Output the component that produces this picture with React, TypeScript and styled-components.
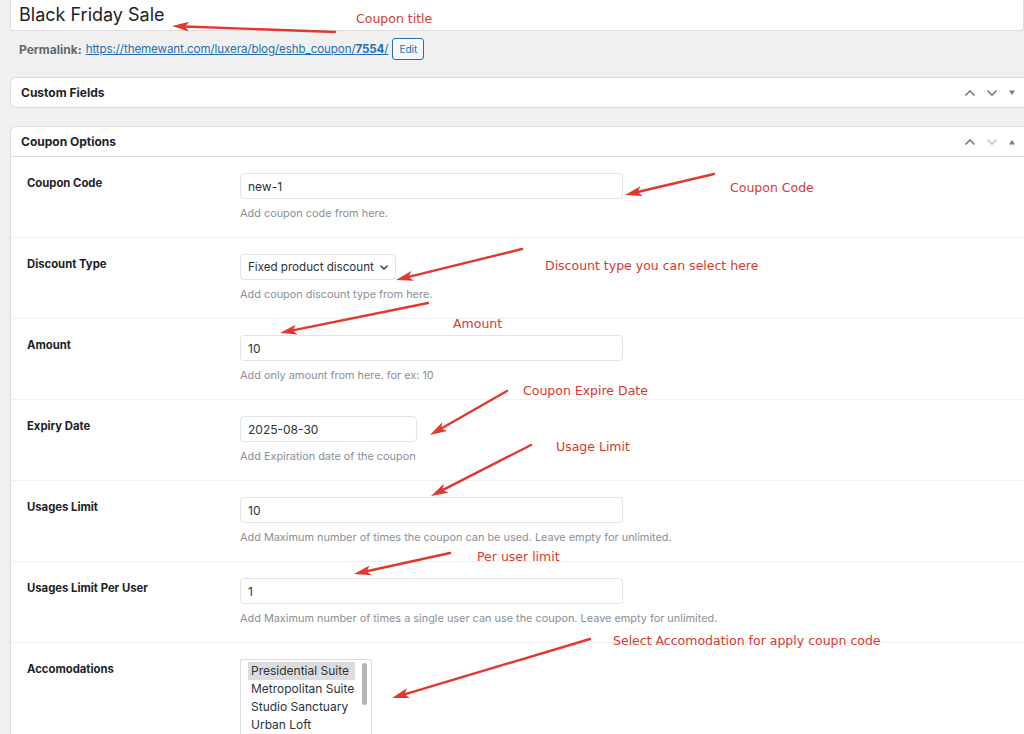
import React from 'react';
import styled, { createGlobalStyle } from 'styled-components';

const GlobalStyle = createGlobalStyle`
  html, body {
    margin: 0;
    padding: 0;
    background: #f0f0f1;
    font-family: Inter, "Liberation Sans", Arial, sans-serif;
    color: #1d2327;
  }
  #root {
    position: relative;
    height: 734px;
    overflow: hidden;
  }
`;

interface Field {
  label: string;
  value: string;
  help: string;
  kind: 'input' | 'select';
  width: number;
}

const fields: Field[] = [
  { label: 'Coupon Code', value: 'new-1', help: 'Add coupon code from here.', kind: 'input', width: 383 },
  { label: 'Discount Type', value: 'Fixed product discount', help: 'Add coupon discount type from here.', kind: 'select', width: 156 },
  { label: 'Amount', value: '10', help: 'Add only amount from here. for ex: 10', kind: 'input', width: 383 },
  { label: 'Expiry Date', value: '2025-08-30', help: 'Add Expiration date of the coupon', kind: 'input', width: 177 },
  { label: 'Usages Limit', value: '10', help: 'Add Maximum number of times the coupon can be used. Leave empty for unlimited.', kind: 'input', width: 383 },
  {
    label: 'Usages Limit Per User',
    value: '1',
    help: 'Add Maximum number of times a single user can use the coupon. Leave empty for unlimited.',
    kind: 'input',
    width: 383,
  },
];

const accommodations = ['Presidential Suite', 'Metropolitan Suite', 'Studio Sanctuary', 'Urban Loft'];

// annotation arrows: tail -> head
const arrows = [
  { x1: 335, y1: 32, x2: 172, y2: 26 },
  { x1: 714, y1: 174, x2: 625, y2: 195 },
  { x1: 522, y1: 249, x2: 396, y2: 280 },
  { x1: 428, y1: 303, x2: 280, y2: 333 },
  { x1: 507, y1: 391, x2: 430, y2: 435 },
  { x1: 531, y1: 445, x2: 431, y2: 496 },
  { x1: 450, y1: 553, x2: 354, y2: 574 },
  { x1: 590, y1: 639, x2: 392, y2: 698 },
];

const notes = [
  { text: 'Coupon title', x: 356, y: 11 },
  { text: 'Coupon Code', x: 730, y: 180 },
  { text: 'Discount type you can select here', x: 545, y: 258 },
  { text: 'Amount', x: 453, y: 316 },
  { text: 'Coupon Expire Date', x: 523, y: 383 },
  { text: 'Usage Limit', x: 556, y: 439 },
  { text: 'Per user limit', x: 477, y: 549 },
  { text: 'Select Accomodation for apply coupn code', x: 613, y: 633 },
];

const arrowHead = (a: { x1: number; y1: number; x2: number; y2: number }) => {
  const dx = a.x2 - a.x1;
  const dy = a.y2 - a.y1;
  const len = Math.hypot(dx, dy);
  const ux = dx / len;
  const uy = dy / len;
  const L = 17;
  const W = 5;
  const bx = a.x2 - ux * L;
  const by = a.y2 - uy * L;
  return {
    points: `${a.x2},${a.y2} ${bx - uy * W},${by + ux * W} ${bx + ux * 4},${by + uy * 4} ${bx + uy * W},${by - ux * W}`,
    lx: bx + ux * 4,
    ly: by + uy * 4,
  };
};

const ChevronUp = ({ color }: { color: string }) => (
  <svg width="12" height="8" viewBox="0 0 12 8">
    <path d="M1.5 6.5 L6 2 L10.5 6.5" fill="none" stroke={color} strokeWidth="1.6" />
  </svg>
);

const ChevronDown = ({ color }: { color: string }) => (
  <svg width="12" height="8" viewBox="0 0 12 8">
    <path d="M1.5 1.5 L6 6 L10.5 1.5" fill="none" stroke={color} strokeWidth="1.6" />
  </svg>
);

const Triangle = ({ up }: { up?: boolean }) => (
  <svg width="8" height="6" viewBox="0 0 8 6">
    <path d={up ? 'M1 5.5 L4 1 L7 5.5 Z' : 'M1 0.5 L4 5 L7 0.5 Z'} fill="#787c82" />
  </svg>
);

const App: React.FC = () => {
  return (
    <>
      <GlobalStyle />
      <Page>
        <TitleBox>Black Friday Sale</TitleBox>
        <PermalinkRow>
          <PermalinkLabel>Permalink:</PermalinkLabel>
          <PermalinkLink>
            https://themewant.com/luxera/blog/eshb_coupon/<b>7554</b>/
          </PermalinkLink>
          <EditButton>Edit</EditButton>
        </PermalinkRow>

        <Panel>
          <PanelHeader>
            <PanelTitle>Custom Fields</PanelTitle>
            <HeaderActions>
              <ChevronUp color="#787c82" />
              <ChevronDown color="#787c82" />
              <Triangle />
            </HeaderActions>
          </PanelHeader>
        </Panel>

        <Panel $open>
          <PanelHeader $open>
            <PanelTitle>Coupon Options</PanelTitle>
            <HeaderActions>
              <ChevronUp color="#787c82" />
              <ChevronDown color="#c3c4c7" />
              <Triangle up />
            </HeaderActions>
          </PanelHeader>

          {fields.map((f) => (
            <FieldRow key={f.label}>
              <FieldLabel>{f.label}</FieldLabel>
              <FieldBody>
                {f.kind === 'select' ? (
                  <SelectBox $width={f.width}>
                    {f.value}
                    <svg width="10" height="7" viewBox="0 0 10 7">
                      <path d="M1.5 1.5 L5 5 L8.5 1.5" fill="none" stroke="#2c3338" strokeWidth="1.4" />
                    </svg>
                  </SelectBox>
                ) : (
                  <TextInput $width={f.width}>{f.value}</TextInput>
                )}
                <HelpText>{f.help}</HelpText>
              </FieldBody>
            </FieldRow>
          ))}

          <FieldRow $last>
            <FieldLabel>Accomodations</FieldLabel>
            <FieldBody>
              <MultiSelect>
                <OptionList>
                  {accommodations.map((a, i) => (
                    <OptionItem key={a} $selected={i === 0}>
                      {a}
                    </OptionItem>
                  ))}
                </OptionList>
                <ScrollTrack>
                  <ScrollThumb />
                </ScrollTrack>
              </MultiSelect>
            </FieldBody>
          </FieldRow>
        </Panel>
      </Page>

      <Overlay width="1024" height="734" viewBox="0 0 1024 734">
        {arrows.map((a, i) => {
          const h = arrowHead(a);
          return (
            <g key={i}>
              <line x1={a.x1} y1={a.y1} x2={h.lx} y2={h.ly} stroke="#e0392d" strokeWidth="2.4" strokeLinecap="round" />
              <polygon points={h.points} fill="#e0392d" />
            </g>
          );
        })}
      </Overlay>
      {notes.map((n) => (
        <Note key={n.text} $x={n.x} $y={n.y}>
          {n.text}
        </Note>
      ))}
    </>
  );
};

export default App;

// Styled components
const Page = styled.div`
  padding-left: 10px;
  height: 734px;
  box-sizing: border-box;
  display: flex;
  flex-direction: column;
`;

const TitleBox = styled.div`
  height: 31px;
  flex-shrink: 0;
  box-sizing: border-box;
  background: #fff;
  border: 1px solid #dcdcde;
  border-top: none;
  border-radius: 0 0 4px 4px;
  padding: 4px 0 0 8px;
  font-size: 18px;
  color: #1d2327;
  line-height: 22px;
`;

const PermalinkRow = styled.div`
  display: flex;
  align-items: center;
  height: 22px;
  flex-shrink: 0;
  margin-top: 7px;
  padding-left: 9px;
  font-size: 12px;
`;

const PermalinkLabel = styled.span`
  font-weight: 700;
  color: #646970;
  margin-right: 4px;
`;

const PermalinkLink = styled.span`
  color: #2271b1;
  text-decoration: underline;
  font-size: 11.6px;
  letter-spacing: -0.1px;
`;

const EditButton = styled.span`
  margin-left: 4px;
  height: 22px;
  box-sizing: border-box;
  padding: 0 6px;
  display: flex;
  align-items: center;
  border: 1px solid #2271b1;
  border-radius: 3px;
  font-size: 10px;
  color: #2271b1;
  background: #f6f7f7;
`;

const Panel = styled.div<{ $open?: boolean }>`
  margin-top: ${({ $open }) => ($open ? '18px' : '17px')};
  flex-shrink: 0;
  background: #fff;
  border: 1px solid #dcdcde;
  border-right: none;
  border-radius: 6px 0 0 6px;
  ${({ $open }) => ($open ? 'border-bottom: none; border-radius: 6px 0 0 0; flex: 1 0 auto;' : '')}
`;

const PanelHeader = styled.div<{ $open?: boolean }>`
  height: 29px;
  display: flex;
  align-items: center;
  justify-content: space-between;
  padding: 0 8px 0 10px;
  border-bottom: ${({ $open }) => ($open ? '1px solid #dcdcde' : 'none')};
`;

const PanelTitle = styled.h2`
  margin: 0;
  font-size: 12px;
  font-weight: 700;
  color: #1d2327;
`;

const HeaderActions = styled.div`
  display: flex;
  align-items: center;
  gap: 10px;
`;

const FieldRow = styled.div<{ $last?: boolean }>`
  display: grid;
  grid-template-columns: 213px 1fr;
  height: 81px;
  box-sizing: border-box;
  padding: 16px 0 0 16px;
  border-bottom: ${({ $last }) => ($last ? 'none' : '1px solid #f0f0f1')};
`;

const FieldLabel = styled.div`
  font-size: 11.3px;
  font-weight: 700;
  color: #1d2327;
  padding-top: 3px;
`;

const FieldBody = styled.div`
  display: flex;
  flex-direction: column;
  align-items: flex-start;
`;

const TextInput = styled.div<{ $width: number }>`
  width: ${({ $width }) => $width}px;
  height: 26px;
  box-sizing: border-box;
  border: 1px solid #e2e4e7;
  border-radius: 4px;
  padding: 0 7px;
  display: flex;
  align-items: center;
  font-size: 12px;
  color: #2c3338;
  white-space: nowrap;
`;

const SelectBox = styled(TextInput)`
  justify-content: space-between;
  padding: 0 6px 0 7px;
  font-size: 11.6px;
  gap: 4px;
`;

const HelpText = styled.div`
  margin-top: 7px;
  font-size: 10.9px;
  color: #8c8f94;
`;

const MultiSelect = styled.div`
  width: 132px;
  height: 90px;
  box-sizing: border-box;
  border: 1px solid #dcdcde;
  border-radius: 2px;
  padding: 2px 3px 0 7px;
  display: flex;
  justify-content: space-between;
`;

const OptionList = styled.div`
  display: flex;
  flex-direction: column;
  width: 107px;
`;

const OptionItem = styled.div<{ $selected?: boolean }>`
  height: 18px;
  line-height: 18px;
  padding-left: 3px;
  font-size: 12px;
  color: #2c3338;
  white-space: nowrap;
  background: ${({ $selected }) => ($selected ? '#dcdcde' : 'transparent')};
`;

const ScrollTrack = styled.div`
  width: 8px;
  padding-top: 1px;
  display: flex;
  justify-content: center;
`;

const ScrollThumb = styled.div`
  width: 5px;
  height: 42px;
  border-radius: 3px;
  background: #b4b5b7;
`;

const Overlay = styled.svg`
  position: absolute;
  left: 0;
  top: 0;
  pointer-events: none;
`;

const Note = styled.span<{ $x: number; $y: number }>`
  position: absolute;
  left: ${({ $x }) => $x}px;
  top: ${({ $y }) => $y}px;
  font-family: "DejaVu Sans", Verdana, sans-serif;
  font-size: 12.5px;
  line-height: 16px;
  color: #d9392e;
  white-space: nowrap;
`;
